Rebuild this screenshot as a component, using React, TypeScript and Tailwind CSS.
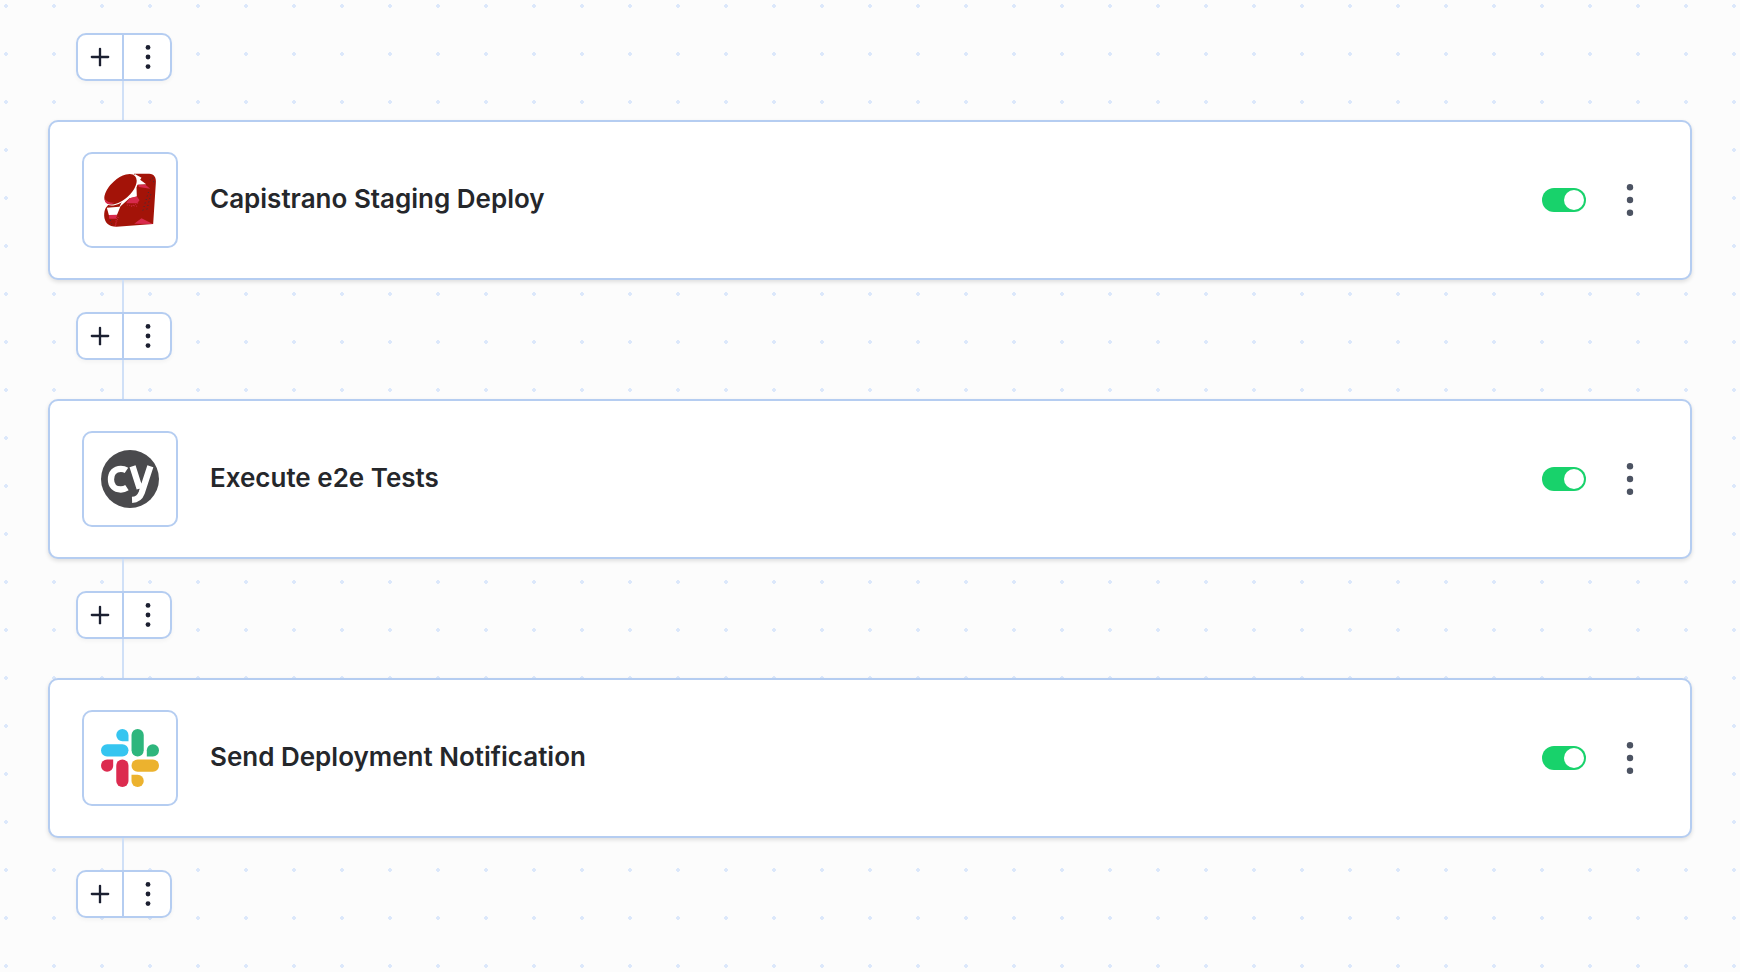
import {Plus} from 'lucide-react';
import {useState} from 'react';
import type {ReactNode} from 'react';

interface WorkflowStep {
  id: string;
  title: string;
  icon: ReactNode;
}

function RubyLogo() {
  return (
    <svg viewBox="-1 0 161 162" className="h-[54px] w-[54px]" aria-hidden="true">
      <path d="M92 2h45c15 0 22 12 20 28l-8 123-110 8C15 161 3 148 2 128c0-9 1-17 5-24z" fill="#a31308" />
      <path d="M94 3l20 11-4 6 18 14-26 1-3 8 1 28-22 5-27 24-11 27-24-1-6-22 38-3z" fill="#fff" />
      <path d="M16 126l25-1-4 12H17zM78 76l22-6 8 12-7 9H68zM104 35l22 0 14 12-34-5zM92 152l22-16 34 17z" fill="#d82a4c" />
      <path d="M40 128l-5 32M44 132l-8 27M104 90l-24 12M70 96l34 4" stroke="#d82a4c" strokeWidth="2.500" strokeDasharray="3 4" fill="none" />
      <ellipse cx="52" cy="50" rx="61" ry="33" transform="rotate(-42 52 50)" fill="#fff" />
      <ellipse cx="51" cy="49" rx="59" ry="31" transform="rotate(-42 51 49)" fill="#a31308" />
      <path d="M4 78c6 7 16 13 29 11l-10 5C10 95 3 88 4 78z" fill="#d82a4c" />
      <path d="M139 20l9 4M147 14l6 22M135 57l-17 56M142 64l-13 50M20 141l5 12" stroke="#37303c" strokeWidth="3" strokeDasharray="3 8" fill="none" />
    </svg>
  );
}

function CypressLogo() {
  return (
    <svg viewBox="0 0 57 57" className="h-[58px] w-[58px]" aria-hidden="true">
      <circle cx="28.500" cy="28.500" r="28.500" fill="#4a4a4d" />
      <path d="M25 20C23.500 19 21.800 18.500 19.500 18.500c-6 0-9.700 4-9.700 10.500 0 6.200 3.700 9.800 9.700 9.800 2.200 0 4-.5 6-1.800" fill="none" stroke="#fff" strokeWidth="6.200" />
      <path d="M31 16l7 22M48.500 16L40 42c-1.800 5-4.500 6.800-9.500 7" fill="none" stroke="#fff" strokeWidth="6.200" />
    </svg>
  );
}

function SlackLogo() {
  return (
    <svg viewBox="0 0 57 57" className="h-[58px] w-[58px]" aria-hidden="true">
      <path d="M21 0a6 6 0 1 0 0 12h6V6a6 6 0 0 0-6-6z" fill="#36c5f0" />
      <rect x="0" y="15" width="27" height="12" rx="6" fill="#36c5f0" />
      <rect x="30" y="0" width="12" height="27" rx="6" fill="#2eb67d" />
      <path d="M57 21a6 6 0 1 0-12 0v6h6a6 6 0 0 0 6-6z" fill="#2eb67d" />
      <path d="M0 36a6 6 0 1 0 12 0v-6H6a6 6 0 0 0-6 6z" fill="#dc2b4f" />
      <rect x="15" y="30" width="12" height="27" rx="6" fill="#dc2b4f" />
      <rect x="30" y="30" width="27" height="12" rx="6" fill="#ecb22e" />
      <path d="M36 57a6 6 0 1 0 0-12h-6v6a6 6 0 0 0 6 6z" fill="#ecb22e" />
    </svg>
  );
}

const steps: WorkflowStep[] = [
  {id: 'deploy', title: 'Capistrano Staging Deploy', icon: <RubyLogo />},
  {id: 'tests', title: 'Execute e2e Tests', icon: <CypressLogo />},
  {id: 'notify', title: 'Send Deployment Notification', icon: <SlackLogo />},
];

function Connector({className}: {className: string}) {
  return <div className={`ml-[74px] w-0.5 bg-[#d0e0f7] ${className}`} />;
}

function StepControls() {
  return (
    <div className="ml-7 flex h-12 w-24 overflow-hidden rounded-[10px] border-2 border-[#b5cdf1] bg-white text-[#1b1f30] shadow-[0_2px_4px_rgba(0,0,0,0.04)]">
      <button type="button" aria-label="Add step" className="flex w-[46px] items-center justify-center border-r-2 border-[#b5cdf1]">
        <Plus className="h-7 w-7" strokeWidth={2} />
      </button>
      <button type="button" aria-label="Step options" className="flex flex-1 items-center justify-center pl-0.5">
        <svg viewBox="0 0 6 24" className="h-6 w-1.5" fill="currentColor" aria-hidden="true">
          <circle cx="3" cy="2.400" r="2.400" />
          <circle cx="3" cy="12" r="2.400" />
          <circle cx="3" cy="21.600" r="2.400" />
        </svg>
      </button>
    </div>
  );
}

function StepCard({step}: {step: WorkflowStep}) {
  const [enabled, setEnabled] = useState(true);

  return (
    <article className="flex items-center rounded-[10px] border-2 border-[#b5cdf1] bg-white py-[30px] pr-10 pl-8 shadow-[0_2px_4px_rgba(0,0,0,0.12)]">
      <div className="flex h-24 w-24 shrink-0 items-center justify-center rounded-[10px] border-2 border-[#b5cdf1]">{step.icon}</div>
      <h2 className="ml-8 flex-1 pb-0.5 text-[26px] leading-8 font-semibold text-[#25272b]">{step.title}</h2>
      <input
        type="checkbox"
        role="switch"
        aria-label={`Enable ${step.title}`}
        checked={enabled}
        onChange={(event) => setEnabled(event.target.checked)}
        className="h-6 w-11 shrink-0 cursor-pointer appearance-none rounded-full bg-gray-300 p-0.5 before:block before:h-5 before:w-5 before:rounded-full before:bg-white checked:bg-[#18d26b] checked:before:ml-5"
      />
      <button type="button" aria-label={`${step.title} options`} className="ml-6 flex h-10 w-10 items-center justify-center text-[#4c5362]">
        <svg viewBox="0 0 8 32" className="h-8 w-2" fill="currentColor" aria-hidden="true">
          <circle cx="4" cy="3.200" r="3.200" />
          <circle cx="4" cy="16" r="3.200" />
          <circle cx="4" cy="28.800" r="3.200" />
        </svg>
      </button>
    </article>
  );
}

export default function App() {
  return (
    <main className="min-h-screen bg-[#fcfcfc] bg-[radial-gradient(circle_at_6px_6px,#dce8fb_2px,transparent_2px)] bg-[size:48px_48px] px-12 pt-[33px] pb-12 font-['Inter',sans-serif]">
      <StepControls />
      {steps.map((step) => (
        <section key={step.id}>
          <Connector className="h-[39px]" />
          <StepCard step={step} />
          <Connector className="h-8" />
          <StepControls />
        </section>
      ))}
    </main>
  );
}
